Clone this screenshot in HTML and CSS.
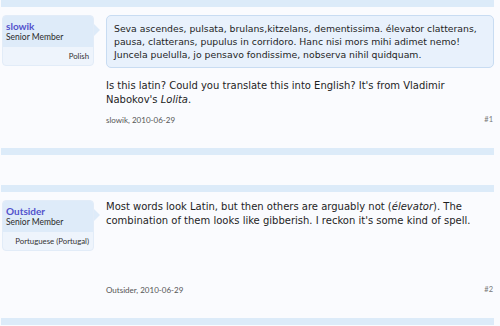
FILE: index.html
```html
<!DOCTYPE html>
<html>
    <head>
        <meta charset="utf-8">
        <title>Thread</title>
        <link rel="stylesheet" href="styles.css">
    </head>
    <body>
        <div class="thread">
            <div class="bar"></div>

            <div class="post">
                <div class="user">
                    <div class="user-info">
                        <a class="name" href="#">slowik</a>
                        <div class="rank">Senior Member</div>
                    </div>
                    <div class="user-extra">Polish</div>
                </div>
                <div class="message">
                    <div class="content">
                        <div class="quote">Seva ascendes, pulsata, brulans,kitzelans, dementissima. élevator clatterans, pausa, clatterans, pupulus in corridoro. Hanc nisi mors mihi adimet nemo! Juncela puelulla, jo pensavo fondissime, nobserva nihil quidquam.</div>
                        <p>Is this latin? Could you translate this into English? It's from Vladimir Nabokov's <i>Lolita</i>.</p>
                    </div>
                    <div class="meta">
                        <span>slowik, 2010-06-29</span>
                        <span class="num">#1</span>
                    </div>
                </div>
            </div>

            <div class="bar"></div>
            <div class="spacer"></div>
            <div class="bar"></div>

            <div class="post">
                <div class="user">
                    <div class="user-info">
                        <a class="name" href="#">Outsider</a>
                        <div class="rank">Senior Member</div>
                    </div>
                    <div class="user-extra">Portuguese (Portugal)</div>
                </div>
                <div class="message">
                    <div class="content">
                        <p class="first">Most words look Latin, but then others are arguably not (<i>élevator</i>). The combination of them looks like gibberish. I reckon it's some kind of spell.</p>
                    </div>
                    <div class="meta">
                        <span>Outsider, 2010-06-29</span>
                        <span class="num">#2</span>
                    </div>
                </div>
            </div>

            <div class="bar"></div>
        </div>
    </body>
</html>
```

FILE: styles.css
```css
* {
    margin: 0;
    padding: 0;
    box-sizing: border-box;
}
body {
    background: #fafbfe;
    font-family: "DejaVu Sans", Verdana, sans-serif;
    color: #1e1e1e;
}
.thread {
    width: 493px;
    margin-left: 1px;
}
.bar {
    height: 7px;
    background: #dcebf9;
}
.spacer {
    height: 30px;
}
.post {
    display: flex;
    padding: 8px 0 0 1px;
}
.user {
    position: relative;
    width: 92px;
    flex: none;
    align-self: flex-start;
    border: 1px solid #e2ecf8;
    border-radius: 4px;
    background: #eef4fc;
    font-family: Lato, "Liberation Sans", sans-serif;
}
.user::after {
    content: "";
    position: absolute;
    top: 8px;
    right: -7px;
    border-style: solid;
    border-width: 6px 0 6px 6px;
    border-color: transparent transparent transparent #deebf9;
}
.user-info {
    padding: 4px 3px 5px;
    background: #deebf9;
    border-radius: 3px 3px 0 0;
}
.name {
    display: block;
    font-size: 10px;
    line-height: 12px;
    font-weight: bold;
    color: #5252cc;
    text-decoration: none;
}
.rank {
    height: 10px;
    font-size: 8.5px;
    line-height: 10px;
    color: #2a2a2a;
}
.user-extra {
    height: 18px;
    padding: 4px 4px 0;
    font-size: 7.8px;
    line-height: 10px;
    text-align: right;
    color: #333;
}
.message {
    flex: 1;
    margin-left: 12px;
    display: flex;
    flex-direction: column;
}
.content {
    min-height: 77px;
    font-size: 10px;
}
.quote {
    padding: 6px 10px 6px 7px;
    border: 1px solid #c8dcf2;
    border-radius: 5px;
    background: #e8f1fc;
    font-size: 9.3px;
    line-height: 13px;
}
.content p {
    margin-top: 11px;
    line-height: 14px;
}
.content p.first {
    margin-top: 0;
}
.meta {
    display: flex;
    justify-content: space-between;
    margin-top: 7px;
    padding: 0 1px 22px 0;
    font-family: Lato, "Liberation Sans", sans-serif;
    font-size: 8px;
    line-height: 12px;
    color: #555;
}
.meta .num {
    color: #777;
    font-size: 7.5px;
}
```
